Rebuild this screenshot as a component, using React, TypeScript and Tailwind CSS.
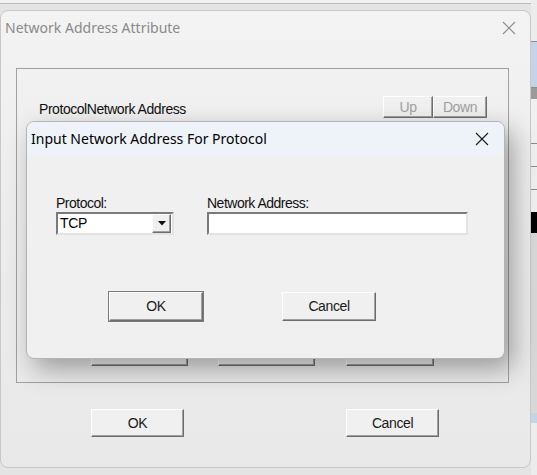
import React from "react";

const ui = { fontFamily: '"Noto Sans", "Open Sans", sans-serif' };
const classic = { fontFamily: '"Liberation Sans", Arial, sans-serif' };

function Btn({ label, className = "", disabled = false }: { label: string; className?: string; disabled?: boolean }) {
  return (
    <div
      className={`flex items-center justify-center border border-t-white border-l-white border-b-[#6d6d6d] border-r-[#6d6d6d] bg-[#f0f0f0] shadow-[inset_-1px_-1px_0_#a0a0a0] text-[14px] tracking-[-0.4px] ${
        disabled ? "text-[#a0a0a0]" : "text-[#1a1a1a]"
      } ${className}`}
      style={classic}
    >
      {label}
    </div>
  );
}

function Sunken({ className = "", children }: { className?: string; children?: React.ReactNode }) {
  return (
    <div
      className={`flex items-center border-2 border-t-[#7a7a7a] border-l-[#7a7a7a] border-b-[#e3e3e3] border-r-[#e3e3e3] bg-white ${className}`}
    >
      {children}
    </div>
  );
}

function CloseX({ color }: { color: string }) {
  return (
    <svg width="14" height="14" viewBox="0 0 14 14" fill="none">
      <path d="M1 1L13 13M13 1L1 13" stroke={color} strokeWidth="1.1" />
    </svg>
  );
}

export default function App() {
  return (
    <div className="relative h-[475px] w-[537px] overflow-hidden bg-[#e4e4e4]">
      {/* window behind, top edge */}
      <div className="h-[4px] border-b border-[#b9b9b9] bg-[#f2f2f2]" />

      {/* window behind, right strip */}
      <div className="absolute right-0 top-0 flex h-full w-[6px] flex-col bg-[#ececec]">
        <div className="h-[41px]" />
        <div className="h-[47px] border-y border-[#8c8c8c] bg-[#c3d4e6]" />
        <div className="h-[11px] bg-[#9a9a9a]" />
        <div className="h-[45px] border-b border-[#8c8c8c] bg-[#f0f0f0]" />
        <div className="h-[23px] border-b border-[#8c8c8c] bg-[#f0f0f0]" />
        <div className="h-[23px] border-b border-[#8c8c8c] bg-[#f0f0f0]" />
        <div className="h-[22px] bg-[#f0f0f0]" />
        <div className="h-[21px] bg-black" />
        <div className="h-[180px] bg-[#d8d8d8]" />
        <div className="h-[10px] bg-[#c3d4e6]" />
      </div>

      {/* Network Address Attribute window */}
      <div
        className="absolute left-0 top-[10px] flex h-[458px] w-[531px] flex-col rounded-lg border border-[#c8c8c8] bg-gradient-to-b from-[#f3f3f3] via-[#ececec] to-[#e9e9e9]"
        style={ui}
      >
        <div className="flex h-[33px] items-center justify-between pl-[4px] pr-[14px]">
          <span className="text-[14px] text-[#8a8a8a]">Network Address Attribute</span>
          <CloseX color="#8a8a8a" />
        </div>

        <div className="ml-[15px] mt-[24px] flex h-[315px] w-[493px] flex-col border border-[#a0a0a0]">
          <div className="mt-[27px] flex h-[22px] items-center pl-[22px] pr-[21px]">
            <span className="flex-1 pt-[4px] text-[14px] tracking-[-0.45px] text-[#111]" style={classic}>
              ProtocolNetwork Address
            </span>
            <Btn label="Up" disabled className="h-[22px] w-[50px]" />
            <Btn label="Down" disabled className="h-[22px] w-[54px]" />
          </div>
          <div className="mx-[22px] mt-[3px] h-[218px] rounded-md border border-[#c4c4c4] bg-[#eef3fa]" />
          <div className="mt-[4px] flex pl-[74px]">
            <Btn label="Add" className="h-[23px] w-[97px]" />
            <Btn label="Edit" className="ml-[30px] h-[23px] w-[97px]" />
            <Btn label="Delete" className="ml-[31px] h-[23px] w-[88px]" />
          </div>
        </div>

        <div className="mt-[26px] flex pl-[90px]">
          <Btn label="OK" className="h-[28px] w-[93px]" />
          <Btn label="Cancel" className="ml-[162px] h-[28px] w-[93px]" />
        </div>
      </div>

      {/* modal: Input Network Address For Protocol */}
      <div
        className="absolute left-[26px] top-[121px] flex h-[238px] w-[479px] flex-col overflow-hidden rounded-lg border border-[#b4b4b4] bg-[#f0f0f0] shadow-[8px_10px_26px_rgba(0,0,0,0.34)]"
        style={ui}
      >
        <div className="flex h-[33px] items-center justify-between bg-[#eef3fa] pl-[4px] pr-[15px]">
          <span className="text-[14px] text-black">Input Network Address For Protocol</span>
          <CloseX color="#1a1a1a" />
        </div>

        <div className="mt-[40px] flex pl-[29px]" style={classic}>
          <div className="flex flex-col">
            <span className="text-[14px] leading-[17px] tracking-[-0.5px] text-[#111]">Protocol:</span>
            <Sunken className="h-[23px] w-[118px] justify-between pl-[2px] pr-[1px]">
              <span className="text-[14px] tracking-[-0.3px] text-black">TCP</span>
              <div className="flex h-[19px] w-[19px] items-center justify-center border border-t-white border-l-white border-b-[#6d6d6d] border-r-[#6d6d6d] bg-[#f0f0f0] shadow-[inset_-1px_-1px_0_#a0a0a0]">
                <svg width="8" height="5" viewBox="0 0 8 5">
                  <path d="M0 0H8L4 4.5Z" fill="#111" />
                </svg>
              </div>
            </Sunken>
          </div>
          <div className="ml-[33px] flex flex-col">
            <span className="text-[14px] leading-[17px] tracking-[-0.5px] text-[#111]">Network Address:</span>
            <Sunken className="h-[23px] w-[261px]" />
          </div>
        </div>

        <div className="mt-[57px] flex pl-[82px]">
          <Btn label="OK" className="h-[29px] w-[94px] outline outline-1 outline-[#7a7a7a]" />
          <Btn label="Cancel" className="ml-[79px] h-[29px] w-[94px]" />
        </div>
      </div>
    </div>
  );
}
